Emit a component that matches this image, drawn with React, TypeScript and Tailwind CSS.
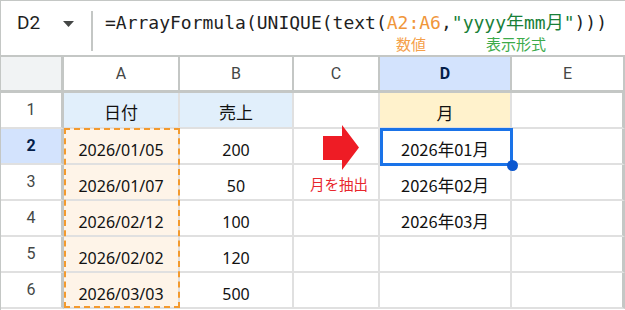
import React from "react";

const cols = ["A", "B", "C", "D", "E"];

const rows = [
  { a: "日付", b: "売上", c: "", d: "月" },
  { a: "2026/01/05", b: "200", c: "", d: "2026年01月" },
  { a: "2026/01/07", b: "50", c: "", d: "2026年02月" },
  { a: "2026/02/12", b: "100", c: "", d: "2026年03月" },
  { a: "2026/02/02", b: "120", c: "", d: "" },
  { a: "2026/03/03", b: "500", c: "", d: "" },
];

const cellFont = { fontFamily: '"Noto Sans", "Noto Sans CJK JP", sans-serif' };

export default function App() {
  return (
    <div className="w-[625px] h-[310px] bg-white overflow-hidden border-l border-t border-[#c4c7c5]">
      {/* 数式バー */}
      <div className="h-[56px] flex border-b-2 border-[#c4c7c5]" style={{ fontFamily: "Roboto, sans-serif" }}>
        <div className="w-[90px] flex items-start pt-[9px] pl-[16px] shrink-0">
          <span className="text-[19px] text-[#1f1f1f] leading-[26px]">D2</span>
          <svg width="11" height="6" viewBox="0 0 11 6" className="ml-[23px] mt-[11px]">
            <path d="M0 0 L11 0 L5.5 6 Z" fill="#444746" />
          </svg>
        </div>
        <div className="w-[2px] bg-[#c4c7c5] mt-[10px] h-[40px] shrink-0" />
        <div className="flex flex-col pl-[12px] pt-[8px]">
          <div
            className="text-[18px] leading-[28px] text-[#1f1f1f] whitespace-nowrap"
            style={{ fontFamily: '"DejaVu Sans Mono", "Noto Sans CJK JP", monospace' }}
          >
            =ArrayFormula(UNIQUE(text(<span className="text-[#f0963a]">A2:A6</span>,
            <span className="text-[#188038]">"yyyy年mm月"</span>)))
          </div>
          <div
            className="flex text-[15px] leading-[18px] -mt-[2px]"
            style={{ fontFamily: '"Noto Sans CJK JP", sans-serif' }}
          >
            <span className="ml-[291px] text-[#f5a04a]">数値</span>
            <span className="ml-[60px] text-[#3cab4a]">表示形式</span>
          </div>
        </div>
      </div>

      {/* グリッド */}
      <div className="relative grid grid-cols-[63px_116px_114px_86px_132px_113px]">
        {/* 列ヘッダー */}
        <div className="h-[36px] bg-[#f1f3f4] border-r-[3px] border-b-[3px] border-[#c4c7c5]" />
        {cols.map((c) => (
          <div
            key={c}
            className={
              "h-[36px] flex items-center justify-center text-[16px] border-r-2 border-b-[3px] border-[#c4c7c5] " +
              (c === "D" ? "bg-[#d3e3fd] text-[#041e49] font-bold" : "bg-white text-[#444746]")
            }
            style={{ fontFamily: "Roboto, sans-serif" }}
          >
            {c}
          </div>
        ))}

        {rows.map((r, i) => {
          const n = i + 1;
          const head = n === 1;
          return (
            <React.Fragment key={n}>
              <div
                className={
                  "h-[36px] flex items-center justify-center text-[16px] border-r-[3px] border-b-2 border-r-[#c4c7c5] border-b-[#e0e0e0] " +
                  (n === 2 ? "bg-[#d3e3fd] text-[#041e49] font-bold" : "bg-white text-[#444746]")
                }
                style={{ fontFamily: "Roboto, sans-serif" }}
              >
                {n}
              </div>
              <div
                className={
                  "h-[36px] flex items-end justify-center border-r-2 border-b-2 border-[#e0e0e0] text-[#111] " +
                  (head ? "bg-[#e1effb] text-[17px] pb-[2px]" : "bg-[#fef4e8] text-[16px] pb-[1px]")
                }
                style={cellFont}
              >
                {r.a}
              </div>
              <div
                className={
                  "h-[36px] flex items-end justify-center border-r-2 border-b-2 border-[#e0e0e0] text-[#111] " +
                  (head ? "bg-[#e1effb] text-[17px] pb-[2px]" : "bg-white text-[16px] pb-[1px]")
                }
                style={cellFont}
              >
                {r.b}
              </div>
              <div className="h-[36px] border-r-2 border-b-2 border-[#e0e0e0] bg-white" />
              <div
                className={
                  "h-[36px] flex items-end justify-center border-r-2 border-b-2 border-[#e0e0e0] text-[#111] " +
                  (head ? "bg-[#fff2cc] text-[17px] pb-[2px]" : "bg-white text-[16.5px] pb-[1px]")
                }
                style={{ fontFamily: '"Noto Sans CJK JP", sans-serif' }}
              >
                {r.d}
              </div>
              <div className="h-[36px] border-r-[3px] border-r-[#c4c7c5] border-b-2 border-b-[#e0e0e0] bg-white" />
            </React.Fragment>
          );
        })}

        {/* A2:A6 の点線 */}
        <div className="absolute left-[63px] top-[71px] w-[116px] h-[180px] border-2 border-dashed border-[#f39a2e] pointer-events-none" />

        {/* D2 選択枠 */}
        <div className="absolute left-[379px] top-[71px] w-[133px] h-[38px] border-[3px] border-[#1a73e8] pointer-events-none" />
        <div className="absolute left-[506px] top-[103px] w-[11px] h-[11px] rounded-full bg-[#0b57d0]" />

        {/* 矢印 */}
        <svg className="absolute left-[322px] top-[68px]" width="37" height="45" viewBox="0 0 37 45">
          <path d="M0 11 L19 11 L19 0 L36 22.5 L19 45 L19 35 L0 35 Z" fill="#ee1c25" />
        </svg>
        <div
          className="absolute left-[309px] top-[117px] text-[14.5px] leading-[20px] text-[#e8262d] whitespace-nowrap"
          style={{ fontFamily: '"Noto Sans CJK JP", sans-serif' }}
        >
          月を抽出
        </div>
      </div>
    </div>
  );
}
